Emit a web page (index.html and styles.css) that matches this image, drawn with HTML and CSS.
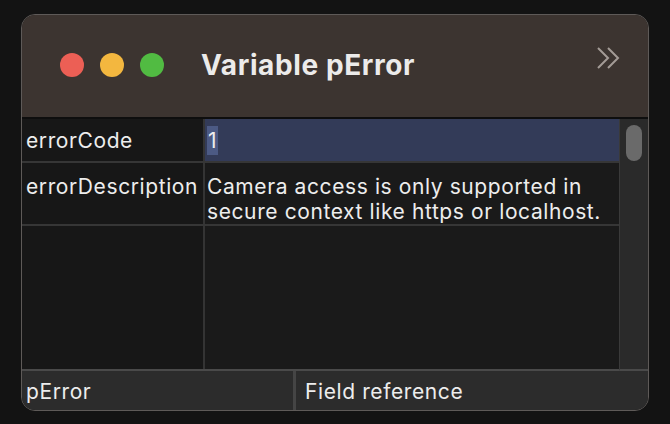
FILE: index.html
```html
<!DOCTYPE html>
<html>
<head>
<meta charset="utf-8">
<link rel="stylesheet" href="styles.css">
</head>
<body>
<div class="window">
  <div class="titlebar">
    <div class="lights">
      <span class="light red"></span>
      <span class="light yellow"></span>
      <span class="light green"></span>
    </div>
    <div class="title">Variable pError</div>
    <svg class="chevron" width="26" height="24" viewBox="0 0 26 24">
      <path d="M2 2 L12 12 L2 22 M12 2 L22 12 L12 22" fill="none" stroke="#a39b96" stroke-width="2"/>
    </svg>
  </div>
  <div class="body">
    <div class="table">
      <div class="row row-code">
        <div class="key">errorCode</div>
        <div class="val selected"><span class="sel">1</span></div>
      </div>
      <div class="row row-desc">
        <div class="key">errorDescription</div>
        <div class="val">Camera access is only supported in secure context like https or localhost.</div>
      </div>
      <div class="row row-empty">
        <div class="key"></div>
        <div class="val"></div>
      </div>
    </div>
    <div class="scrollbar"><div class="thumb"></div></div>
  </div>
  <div class="footer">
    <div class="fcell fname">pError</div>
    <div class="fcell ftype">Field reference</div>
  </div>
</div>
</body>
</html>
```
FILE: styles.css
```css
html, body {
  margin: 0;
  padding: 0;
  background: #131313;
  width: 670px;
  height: 424px;
  overflow: hidden;
  font-family: Inter, "Noto Sans", sans-serif;
}
.window {
  margin: 14px 0 0 21px;
  width: 628px;
  height: 397px;
  box-sizing: border-box;
  border: 1px solid #5e5a58;
  border-radius: 14px;
  overflow: hidden;
  display: flex;
  flex-direction: column;
  background: #1a1a1a;
}
.titlebar {
  height: 104px;
  flex: none;
  background: #3c3430;
  border-bottom: 2px solid #0e0e0e;
  box-sizing: border-box;
  display: flex;
  align-items: center;
  padding: 0 26px 2px 38px;
}
.lights {
  display: flex;
  gap: 16px;
}
.light {
  width: 24px;
  height: 24px;
  border-radius: 50%;
  display: block;
}
.red { background: #ec5f55; }
.yellow { background: #f3b73f; }
.green { background: #51bb42; }
.title {
  margin-left: 37px;
  font-size: 28px;
  font-weight: 700;
  color: #ecebea;
  flex: 1;
  letter-spacing: 0.6px;
}
.chevron {
  margin-bottom: 14px;
}
.body {
  flex: 1;
  display: flex;
  min-height: 0;
}
.table {
  flex: 1;
  display: flex;
  flex-direction: column;
}
.row {
  display: flex;
  font-size: 21px;
  letter-spacing: 0.6px;
  color: #ededed;
  border-bottom: 2px solid #363636;
}
.row-empty {
  flex: 1;
  border-bottom: 2px solid #4a4a4a;
}
.key {
  width: 183px;
  flex: none;
  background: #171717;
  border-right: 2px solid #343434;
  padding: 0 4px;
  box-sizing: border-box;
}
.val {
  flex: 1;
  padding: 0 4px 0 2px;
  background: #1a1a1a;
}
.row-code .key, .row-code .val {
  height: 42px;
  line-height: 44px;
}
.val.selected {
  background: #333b58;
}
.sel {
  background: #4c5a84;
  padding: 2px 1px;
}
.row-desc .key, .row-desc .val {
  height: 61px;
  padding-top: 11px;
  box-sizing: border-box;
  line-height: 25px;
}
.scrollbar {
  width: 29px;
  flex: none;
  background: #2a2a2a;
  border-left: 1px solid #3a3a3a;
  border-bottom: 2px solid #4a4a4a;
  box-sizing: border-box;
  padding: 6px 0 0 6px;
}
.thumb {
  width: 16px;
  height: 36px;
  border-radius: 8px;
  background: #6a6a6a;
}
.footer {
  height: 39px;
  flex: none;
  display: flex;
  background: #2c2c2c;
  font-size: 21px;
  letter-spacing: 0.6px;
  color: #ededed;
}
.fcell {
  line-height: 42px;
  padding-left: 4px;
}
.fname {
  width: 267px;
  border-right: 3px solid #454545;
}
.ftype {
  padding-left: 9px;
}
```
